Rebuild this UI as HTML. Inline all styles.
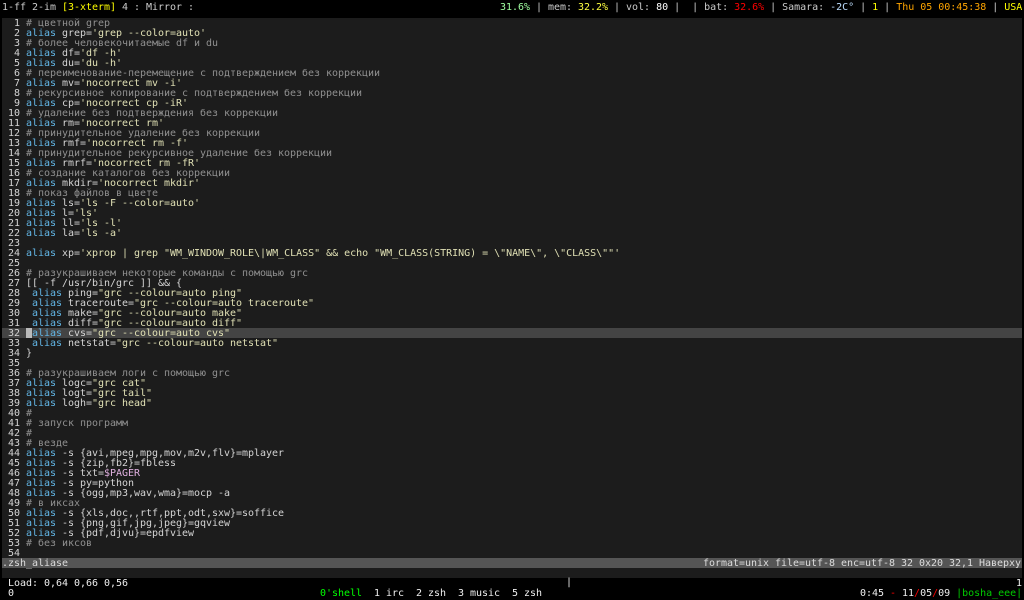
<!DOCTYPE html>
<html><head><meta charset="utf-8"><style>
html,body{margin:0;padding:0;background:#000;width:1024px;height:600px;overflow:hidden}
body{position:relative;font:10px/10px "DejaVu Sans Mono","Liberation Mono",monospace;letter-spacing:-0.02px;color:#ccc}
pre{margin:0;font:inherit;letter-spacing:inherit;white-space:pre}
.a{position:absolute;white-space:pre;height:10px}
#term{position:absolute;left:2px;top:18px;width:1020px;height:560px;background:#1c1c1c}
#hl{position:absolute;left:0;top:310px;width:1020px;height:10px;background:#444}
#cur{position:absolute;left:24px;top:310px;width:6px;height:10px;background:#bbb}
#st{position:absolute;left:0;top:540px;width:1020px;height:10px;background:#555;color:#ddd}
#txt{position:absolute;left:0;top:1px;color:#d4d4d4}
i{font-style:normal;color:#62b6e6}
b{font-weight:normal;color:#909090}
u{text-decoration:none;color:#e0e0b4}
em{font-style:normal;color:#e0b0e0}
</style></head><body>
<div class="a" style="left:2px;top:3px;color:#ccc">1-ff 2-im <span style="color:#ffff00">[3-xterm]</span> 4 : Mirror :</div>
<div class="a" style="left:500px;top:3px;color:#ccc"><span style="color:#a0ffa0">31.6%</span> | mem: <span style="color:#ffff40">32.2%</span> | vol: <span style="color:#fff">80</span> |  | bat: <span style="color:#ff0000">32.6%</span> | Samara: <span style="color:#bfdfff">-2C°</span> | <span style="color:#ffff00">1</span> | <span style="color:#ffa500">Thu 05 00:45:38</span> | <span style="color:#ffff00">USA</span></div>
<div id="term"><div id="hl"></div><div id="cur"></div><pre id="txt">  1 <b># цветной grep</b>
  2 <i>alias</i> grep=<u>'grep --color=auto'</u>
  3 <b># более человекочитаемые df и du</b>
  4 <i>alias</i> df=<u>'df -h'</u>
  5 <i>alias</i> du=<u>'du -h'</u>
  6 <b># переименование-перемещение с подтверждением без коррекции</b>
  7 <i>alias</i> mv=<u>'nocorrect mv -i'</u>
  8 <b># рекурсивное копирование с подтверждением без коррекции</b>
  9 <i>alias</i> cp=<u>'nocorrect cp -iR'</u>
 10 <b># удаление без подтверждения без коррекции</b>
 11 <i>alias</i> rm=<u>'nocorrect rm'</u>
 12 <b># принудительное удаление без коррекции</b>
 13 <i>alias</i> rmf=<u>'nocorrect rm -f'</u>
 14 <b># принудительное рекурсивное удаление без коррекции</b>
 15 <i>alias</i> rmrf=<u>'nocorrect rm -fR'</u>
 16 <b># создание каталогов без коррекции</b>
 17 <i>alias</i> mkdir=<u>'nocorrect mkdir'</u>
 18 <b># показ файлов в цвете</b>
 19 <i>alias</i> ls=<u>'ls -F --color=auto'</u>
 20 <i>alias</i> l=<u>'ls'</u>
 21 <i>alias</i> ll=<u>'ls -l'</u>
 22 <i>alias</i> la=<u>'ls -a'</u>
 23 
 24 <i>alias</i> xp=<u>'xprop | grep "WM_WINDOW_ROLE\|WM_CLASS" &amp;&amp; echo "WM_CLASS(STRING) = \"NAME\", \"CLASS\""'</u>
 25 
 26 <b># разукрашиваем некоторые команды с помощью grc</b>
 27 [[ -f /usr/bin/grc ]] &amp;&amp; {
 28  <i>alias</i> ping=<u>"grc --colour=auto ping"</u>
 29  <i>alias</i> traceroute=<u>"grc --colour=auto traceroute"</u>
 30  <i>alias</i> make=<u>"grc --colour=auto make"</u>
 31  <i>alias</i> diff=<u>"grc --colour=auto diff"</u>
 32  <i>alias</i> cvs=<u>"grc --colour=auto cvs"</u>
 33  <i>alias</i> netstat=<u>"grc --colour=auto netstat"</u>
 34 }
 35 
 36 <b># разукрашиваем логи с помощью grc</b>
 37 <i>alias</i> logc=<u>"grc cat"</u>
 38 <i>alias</i> logt=<u>"grc tail"</u>
 39 <i>alias</i> logh=<u>"grc head"</u>
 40 <b>#</b>
 41 <b># запуск программ</b>
 42 <b>#</b>
 43 <b># везде</b>
 44 <i>alias</i> -s {avi,mpeg,mpg,mov,m2v,flv}=mplayer
 45 <i>alias</i> -s {zip,fb2}=fbless
 46 <i>alias</i> -s txt=<em>$PAGER</em>
 47 <i>alias</i> -s py=python
 48 <i>alias</i> -s {ogg,mp3,wav,wma}=mocp -a
 49 <b># в иксах</b>
 50 <i>alias</i> -s {xls,doc,,rtf,ppt,odt,sxw}=soffice
 51 <i>alias</i> -s {png,gif,jpg,jpeg}=gqview
 52 <i>alias</i> -s {pdf,djvu}=epdfview
 53 <b># без иксов</b>
 54 </pre>
<div id="st"><span class="a" style="left:0;top:1px">.zsh_aliase</span><span class="a" style="left:701px;top:1px">format=unix file=utf-8 enc=utf-8 32 0x20 32,1 Наверху</span></div>
</div>
<div class="a" style="left:8px;top:579px;color:#eee">Load: 0,64 0,66 0,56</div>
<div class="a" style="left:566px;top:578px;color:#eee">|</div>
<div class="a" style="left:1016px;top:579px;color:#eee">1</div>
<div class="a" style="left:8px;top:589px;color:#eee">0</div>
<div class="a" style="left:320px;top:589px;color:#00ff00">0'shell</div>
<div class="a" style="left:374px;top:589px;color:#eee">1 irc</div>
<div class="a" style="left:416px;top:589px;color:#eee">2 zsh</div>
<div class="a" style="left:458px;top:589px;color:#eee">3 music</div>
<div class="a" style="left:512px;top:589px;color:#eee">5 zsh</div>
<div class="a" style="left:860px;top:589px;color:#eee">0:45 <span style="color:#ff0000">-</span> 11<span style="color:#ff0000">/</span>05<span style="color:#ff0000">/</span>09 <span style="color:#00cc00">|bosha_eee|</span></div>
</body></html>
